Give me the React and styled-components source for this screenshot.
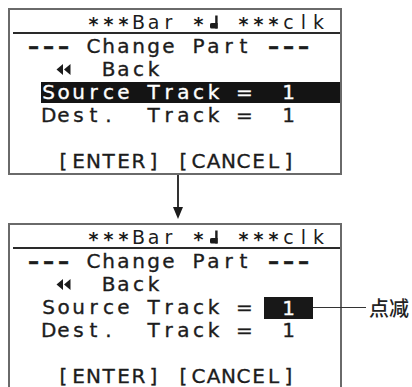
import React from "react";
import styled, { createGlobalStyle, css } from "styled-components";

const GlobalStyle = createGlobalStyle`
  html, body { margin: 0; padding: 0; background: #fff; }
  body {
    font-family: "DejaVu Sans", "Liberation Sans", sans-serif;
    color: #1c1c1c;
  }
`;

const Page = styled.div`
  width: 412px;
  height: 387px;
  overflow: hidden;
  box-sizing: border-box;
  padding: 8px 0 0 8px;
  display: flex;
  flex-direction: column;
`;

const Panel = styled.section`
  flex: none;
  width: 334px;
  box-sizing: border-box;
  border: 2px solid #6a6a6a;
  background: #fff;
`;

const Header = styled.div`
  display: flex;
  align-items: flex-end;
  box-sizing: content-box;
  height: 20px;
  margin-left: 3px;
  padding: 0 0 2px 13px;
  border-bottom: 2px solid #2a2a2a;
  font-size: 19px;
  line-height: 16px;
`;

const Body = styled.div`
  display: flex;
  flex-direction: column;
  padding: 1px 0 0 16px;
`;

const Row = styled.div`
  display: flex;
  align-items: center;
  height: 23px;
  line-height: 23px;
  font-size: 20px;
  white-space: pre;
  -webkit-text-stroke: 0.35px currentColor;
`;

const Cell = styled.span`
  flex: none;
  display: inline-block;
  width: 15px;
  text-align: center;
  ${(p) =>
    p.$dash &&
    css`
      transform: scaleX(1.4);
      font-weight: bold;
    `}
  ${(p) =>
    p.$star &&
    css`
      transform: translateY(1.5px);
      font-weight: bold;
    `}
`;

const IconCell = styled.span`
  flex: none;
  display: flex;
  align-items: center;
  justify-content: center;
  width: 15px;
  height: 100%;
  overflow: visible;
`;

const HeaderIcon = styled.span`
  flex: none;
  display: flex;
  align-items: flex-end;
  justify-content: center;
  width: 15px;
  padding-bottom: 1px;
`;

const Glyph = styled.svg`
  flex: none;
  display: block;
`;

const Highlight = styled.div`
  flex: 1;
  display: flex;
  align-items: center;
  height: 21px;
  line-height: 21px;
  background: #141414;
  color: #fff;
`;

const Blink = styled.div`
  position: relative;
  flex: none;
  display: flex;
  align-items: center;
  justify-content: center;
  width: 49px;
  height: 22px;
  line-height: 22px;
  margin-left: -2px;
  background: #181818;
  color: #fff;
`;

const Callout = styled.div`
  position: absolute;
  left: 100%;
  top: 50%;
  transform: translateY(-50%);
  display: flex;
  align-items: center;
  white-space: nowrap;
  -webkit-text-stroke: 0;
`;

const Leader = styled.span`
  display: block;
  width: 53px;
  height: 1px;
  background: #333;
`;

const Label = styled.span`
  margin-left: 3px;
  font-family: "Noto Sans CJK SC", "Noto Sans", sans-serif;
  font-size: 20px;
  font-weight: 500;
  line-height: 1;
  color: #222;
`;

const Connector = styled.div`
  flex: none;
  height: 48px;
  padding-left: 164px;
  display: flex;
  align-items: flex-start;
`;

const Note = () => (
  <Glyph width="10" height="14" viewBox="0 0 10 14">
    <rect x="6.2" y="0.5" width="2.4" height="13" fill="#1c1c1c" />
    <path d="M1 9.2 Q1 8 3 8 L8.6 8 L8.6 13.5 L2.5 13.5 Q1 13.5 1 12 Z" fill="#1c1c1c" />
  </Glyph>
);

const BackArrows = () => (
  <Glyph width="15" height="11" viewBox="0 0 15 11">
    <path d="M7 0 L0.5 5.5 L7 11 Z M14.5 0 L8 5.5 L14.5 11 Z" fill="#1c1c1c" />
  </Glyph>
);

const ArrowDown = () => (
  <Glyph width="12" height="46" viewBox="0 0 12 46">
    <line x1="6" y1="0" x2="6" y2="34" stroke="#1c1c1c" strokeWidth="1.8" />
    <path d="M1 32 L11 32 L6 44 Z" fill="#1c1c1c" />
  </Glyph>
);

const chars = (str, keyBase = "") =>
  Array.from(str).map((ch, i) => (
    <Cell key={keyBase + i} $dash={ch === "-"} $star={ch === "*"}>
      {ch}
    </Cell>
  ));

const HeaderLine = () => (
  <Header>
    {chars("    ***Bar *", "a")}
    <HeaderIcon>
      <Note />
    </HeaderIcon>
    {chars(" ***clk", "b")}
  </Header>
);

const Screen = ({ blink }) => (
  <Panel>
    <HeaderLine />
    <Body>
      <Row>{chars("--- Change Part ---")}</Row>
      <Row>
        {chars("  ")}
        <IconCell>
          <BackArrows />
        </IconCell>
        {chars("  Back", "c")}
      </Row>
      {blink ? (
        <Row>
          {chars(" Source Track = ")}
          <Blink>
            1
            <Callout>
              <Leader />
              <Label>点减</Label>
            </Callout>
          </Blink>
        </Row>
      ) : (
        <Row>
          {chars(" ")}
          <Highlight>{chars("Source Track =  1", "h")}</Highlight>
        </Row>
      )}
      <Row>{chars(" Dest.  Track =  1")}</Row>
      <Row />
      <Row>{chars("  [ENTER] [CANCEL]")}</Row>
    </Body>
  </Panel>
);

export default function App() {
  return (
    <Page>
      <GlobalStyle />
      <Screen />
      <Connector>
        <ArrowDown />
      </Connector>
      <Screen blink />
    </Page>
  );
}
